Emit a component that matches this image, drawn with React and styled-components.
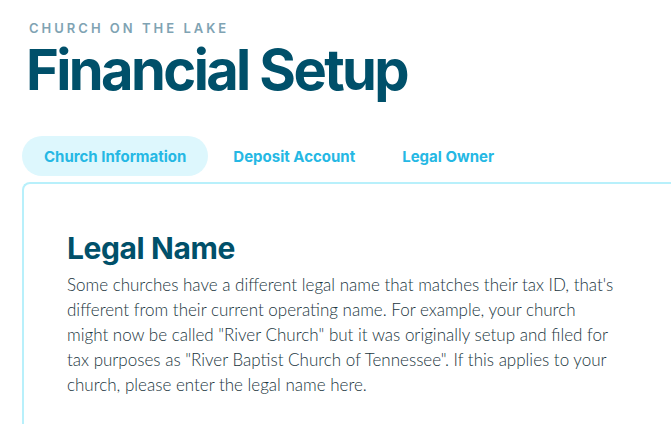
import styled, { createGlobalStyle } from "styled-components";

const GlobalStyle = createGlobalStyle`
  html, body {
    margin: 0;
    padding: 0;
    background: #ffffff;
    overflow: hidden;
  }
`;

const Page = styled.div`
  padding: 20px 0 0 22px;
  font-family: Inter, "Noto Sans", sans-serif;
`;

const Eyebrow = styled.div`
  margin-left: 7px;
  font-size: 13px;
  font-weight: 600;
  letter-spacing: 3px;
  color: #7fa3b3;
  line-height: 16px;
`;

const Title = styled.h1`
  margin: 4px 0 0 4px;
  font-size: 56px;
  font-weight: 700;
  letter-spacing: -2.6px;
  line-height: 60px;
  color: #00506a;
`;

const Tabs = styled.nav`
  display: flex;
  gap: 3px;
  margin-top: 36px;
`;

const Tab = styled.button`
  border: 0;
  height: 40px;
  padding: 0 22px;
  border-radius: 20px;
  font-family: inherit;
  font-size: 15px;
  font-weight: 700;
  color: #25b8e4;
  background: ${(p) => (p.$active ? "#ddf7fd" : "transparent")};
  cursor: pointer;
`;

const Card = styled.section`
  margin-top: 6px;
  border: 2px solid #b8f0fb;
  border-right: 0;
  border-bottom: 0;
  border-radius: 8px 0 0 0;
  padding: 46px 40px 30px 43px;
`;

const Heading = styled.h2`
  margin: 0 0 6px;
  font-size: 30px;
  font-weight: 700;
  letter-spacing: -0.4px;
  color: #00506a;
  line-height: 36px;
`;

const Body = styled.p`
  margin: 0;
  max-width: 553px;
  font-family: Lato, "Open Sans", sans-serif;
  font-weight: 300;
  font-size: 17px;
  line-height: 25px;
  color: #1a3540;
`;

const tabs = ["Church Information", "Deposit Account", "Legal Owner"];

export default function App() {
  return (
    <>
      <GlobalStyle />
      <Page>
        <Eyebrow>CHURCH ON THE LAKE</Eyebrow>
        <Title>Financial Setup</Title>
        <Tabs>
          {tabs.map((t, i) => (
            <Tab key={t} $active={i === 0}>
              {t}
            </Tab>
          ))}
        </Tabs>
        <Card>
          <Heading>Legal Name</Heading>
          <Body>
            Some churches have a different legal name that matches their tax ID,
            that's different from their current operating name. For example, your
            church might now be called "River Church" but it was originally setup
            and filed for tax purposes as "River Baptist Church of Tennessee". If
            this applies to your church, please enter the legal name here.
          </Body>
        </Card>
      </Page>
    </>
  );
}
